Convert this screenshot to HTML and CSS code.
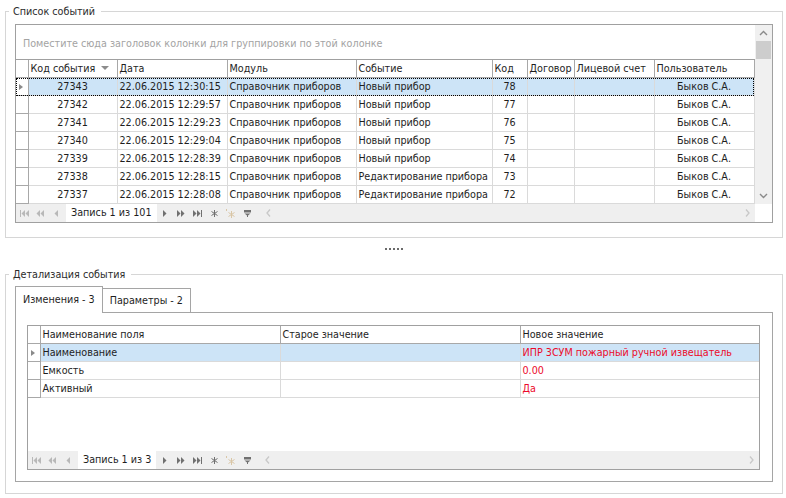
FILE: index.html
```html
<!DOCTYPE html>
<html lang="ru">
<head>
    <meta charset="UTF-8">
    <title>Журнал событий</title>
    <link rel="stylesheet" href="styles.css">
</head>
<body>

    <fieldset class="group group-events">
        <legend>Список событий</legend>
        <div class="grid grid-events">
            <div class="grid-main">
                <div class="group-panel">Поместите сюда заголовок колонки для группировки по этой колонке</div>
                <table class="data">
                    <colgroup>
                        <col style="width: 12px">
                        <col style="width: 89px">
                        <col style="width: 110px">
                        <col style="width: 129px">
                        <col style="width: 136px">
                        <col style="width: 35px">
                        <col style="width: 47px">
                        <col style="width: 80px">
                        <col style="width: 100px">
                    </colgroup>
                    <thead>
                        <tr>
                            <th class="ind"></th>
                            <th>Код события <span class="sort"></span></th>
                            <th>Дата</th>
                            <th>Модуль</th>
                            <th>Событие</th>
                            <th>Код</th>
                            <th>Договор</th>
                            <th>Лицевой счет</th>
                            <th>Пользователь</th>
                        </tr>
                    </thead>
                    <tbody>
                        <tr class="selected focused">
                            <td class="ind"><span class="row-mark"></span></td>
                            <td class="center">27343</td>
                            <td>22.06.2015 12:30:15</td>
                            <td>Справочник приборов</td>
                            <td>Новый прибор</td>
                            <td class="center">78</td>
                            <td></td>
                            <td></td>
                            <td class="center">Быков С.А.</td>
                        </tr>
                        <tr>
                            <td class="ind"></td>
                            <td class="center">27342</td>
                            <td>22.06.2015 12:29:57</td>
                            <td>Справочник приборов</td>
                            <td>Новый прибор</td>
                            <td class="center">77</td>
                            <td></td>
                            <td></td>
                            <td class="center">Быков С.А.</td>
                        </tr>
                        <tr>
                            <td class="ind"></td>
                            <td class="center">27341</td>
                            <td>22.06.2015 12:29:23</td>
                            <td>Справочник приборов</td>
                            <td>Новый прибор</td>
                            <td class="center">76</td>
                            <td></td>
                            <td></td>
                            <td class="center">Быков С.А.</td>
                        </tr>
                        <tr>
                            <td class="ind"></td>
                            <td class="center">27340</td>
                            <td>22.06.2015 12:29:04</td>
                            <td>Справочник приборов</td>
                            <td>Новый прибор</td>
                            <td class="center">75</td>
                            <td></td>
                            <td></td>
                            <td class="center">Быков С.А.</td>
                        </tr>
                        <tr>
                            <td class="ind"></td>
                            <td class="center">27339</td>
                            <td>22.06.2015 12:28:39</td>
                            <td>Справочник приборов</td>
                            <td>Новый прибор</td>
                            <td class="center">74</td>
                            <td></td>
                            <td></td>
                            <td class="center">Быков С.А.</td>
                        </tr>
                        <tr>
                            <td class="ind"></td>
                            <td class="center">27338</td>
                            <td>22.06.2015 12:28:15</td>
                            <td>Справочник приборов</td>
                            <td>Редактирование прибора</td>
                            <td class="center">73</td>
                            <td></td>
                            <td></td>
                            <td class="center">Быков С.А.</td>
                        </tr>
                        <tr>
                            <td class="ind"></td>
                            <td class="center">27337</td>
                            <td>22.06.2015 12:28:08</td>
                            <td>Справочник приборов</td>
                            <td>Редактирование прибора</td>
                            <td class="center">72</td>
                            <td></td>
                            <td></td>
                            <td class="center">Быков С.А.</td>
                        </tr>
                    </tbody>
                </table>
            </div>

            <div class="vscroll">
                <div class="vscroll-btn">
                    <svg width="9" height="6" viewBox="0 0 9 6"><polyline points="1,5 4.5,1.5 8,5" fill="none" stroke="#8a8a8a" stroke-width="1.4"/></svg>
                </div>
                <div class="vscroll-thumb"></div>
                <div class="vscroll-track"></div>
                <div class="vscroll-btn">
                    <svg width="9" height="6" viewBox="0 0 9 6"><polyline points="1,1 4.5,4.5 8,1" fill="none" stroke="#8a8a8a" stroke-width="1.4"/></svg>
                </div>
            </div>

            <div class="navigator">
                <span class="nav-btn off"><svg width="9" height="7" viewBox="0 0 9 7"><rect x="0" y="0" width="1" height="7"/><polygon points="5,0 1.5,3.5 5,7"/><polygon points="9,0 5.5,3.5 9,7"/></svg></span>
                <span class="nav-btn off"><svg width="8" height="7" viewBox="0 0 8 7"><polygon points="4,0 0.5,3.5 4,7"/><polygon points="8,0 4.5,3.5 8,7"/></svg></span>
                <span class="nav-btn off"><svg width="4" height="7" viewBox="0 0 4 7"><polygon points="4,0 0.5,3.5 4,7"/></svg></span>
                <span class="nav-info">Запись 1 из 101</span>
                <span class="nav-btn"><svg width="4" height="7" viewBox="0 0 4 7"><polygon points="0,0 3.5,3.5 0,7"/></svg></span>
                <span class="nav-btn"><svg width="8" height="7" viewBox="0 0 8 7"><polygon points="0,0 3.5,3.5 0,7"/><polygon points="4,0 7.5,3.5 4,7"/></svg></span>
                <span class="nav-btn"><svg width="9" height="7" viewBox="0 0 9 7"><polygon points="0,0 3.5,3.5 0,7"/><polygon points="4,0 7.5,3.5 4,7"/><rect x="8" y="0" width="1" height="7"/></svg></span>
                <span class="nav-btn"><svg width="7" height="7" viewBox="0 0 7 7"><g stroke="#707070" stroke-width="1"><line x1="3.5" y1="0" x2="3.5" y2="7"/><line x1="0.5" y1="1.5" x2="6.5" y2="5.5"/><line x1="0.5" y1="5.5" x2="6.5" y2="1.5"/></g></svg></span>
                <span class="nav-btn"><svg width="10" height="9" viewBox="0 0 10 9"><g stroke="#d9c6a6" stroke-width="1"><line x1="5.5" y1="2" x2="5.5" y2="9"/><line x1="2.5" y1="3.5" x2="8.5" y2="7.5"/><line x1="2.5" y1="7.5" x2="8.5" y2="3.5"/><line x1="0.5" y1="0" x2="0.5" y2="2"/></g></svg></span>
                <span class="nav-btn"><svg width="7" height="7" viewBox="0 0 7 7"><rect x="0" y="0" width="7" height="2.5"/><polygon points="0.5,3.5 6.5,3.5 4,5.5 4,7 3,7 3,5.5"/></svg></span>
                <div class="hscroll">
                    <svg width="5" height="8" viewBox="0 0 5 8"><polyline points="4,0.5 1,4 4,7.5" fill="none" stroke="#c8c8c8" stroke-width="1.3"/></svg>
                    <svg width="5" height="8" viewBox="0 0 5 8"><polyline points="1,0.5 4,4 1,7.5" fill="none" stroke="#c8c8c8" stroke-width="1.3"/></svg>
                </div>
            </div>
            <div class="corner"></div>
        </div>
    </fieldset>

    <div class="splitter"><span class="dots"></span></div>

    <fieldset class="group group-detail">
        <legend>Детализация события</legend>
        <div class="tabs">
            <span class="tab active">Изменения - 3</span>
            <span class="tab">Параметры - 2</span>
        </div>
        <div class="tab-page">
            <div class="grid grid-changes">
                <div class="grid-main">
                    <table class="data">
                        <colgroup>
                            <col style="width: 12px">
                            <col style="width: 240px">
                            <col style="width: 240px">
                            <col style="width: 240px">
                        </colgroup>
                        <thead>
                            <tr>
                                <th class="ind"></th>
                                <th>Наименование поля</th>
                                <th>Старое значение</th>
                                <th class="last">Новое значение</th>
                            </tr>
                        </thead>
                        <tbody>
                            <tr class="selected">
                                <td class="ind"><span class="row-mark"></span></td>
                                <td>Наименование</td>
                                <td></td>
                                <td class="last changed">ИПР 3СУМ пожарный ручной извещатель</td>
                            </tr>
                            <tr>
                                <td class="ind"></td>
                                <td>Емкость</td>
                                <td></td>
                                <td class="last changed">0.00</td>
                            </tr>
                            <tr>
                                <td class="ind"></td>
                                <td>Активный</td>
                                <td></td>
                                <td class="last changed">Да</td>
                            </tr>
                        </tbody>
                    </table>
                </div>

                <div class="navigator">
                    <span class="nav-btn off"><svg width="9" height="7" viewBox="0 0 9 7"><rect x="0" y="0" width="1" height="7"/><polygon points="5,0 1.5,3.5 5,7"/><polygon points="9,0 5.5,3.5 9,7"/></svg></span>
                    <span class="nav-btn off"><svg width="8" height="7" viewBox="0 0 8 7"><polygon points="4,0 0.5,3.5 4,7"/><polygon points="8,0 4.5,3.5 8,7"/></svg></span>
                    <span class="nav-btn off"><svg width="4" height="7" viewBox="0 0 4 7"><polygon points="4,0 0.5,3.5 4,7"/></svg></span>
                    <span class="nav-info">Запись 1 из 3</span>
                    <span class="nav-btn"><svg width="4" height="7" viewBox="0 0 4 7"><polygon points="0,0 3.5,3.5 0,7"/></svg></span>
                    <span class="nav-btn"><svg width="8" height="7" viewBox="0 0 8 7"><polygon points="0,0 3.5,3.5 0,7"/><polygon points="4,0 7.5,3.5 4,7"/></svg></span>
                    <span class="nav-btn"><svg width="9" height="7" viewBox="0 0 9 7"><polygon points="0,0 3.5,3.5 0,7"/><polygon points="4,0 7.5,3.5 4,7"/><rect x="8" y="0" width="1" height="7"/></svg></span>
                    <span class="nav-btn"><svg width="7" height="7" viewBox="0 0 7 7"><g stroke="#707070" stroke-width="1"><line x1="3.5" y1="0" x2="3.5" y2="7"/><line x1="0.5" y1="1.5" x2="6.5" y2="5.5"/><line x1="0.5" y1="5.5" x2="6.5" y2="1.5"/></g></svg></span>
                    <span class="nav-btn"><svg width="10" height="9" viewBox="0 0 10 9"><g stroke="#d9c6a6" stroke-width="1"><line x1="5.5" y1="2" x2="5.5" y2="9"/><line x1="2.5" y1="3.5" x2="8.5" y2="7.5"/><line x1="2.5" y1="7.5" x2="8.5" y2="3.5"/><line x1="0.5" y1="0" x2="0.5" y2="2"/></g></svg></span>
                    <span class="nav-btn"><svg width="7" height="7" viewBox="0 0 7 7"><rect x="0" y="0" width="7" height="2.5"/><polygon points="0.5,3.5 6.5,3.5 4,5.5 4,7 3,7 3,5.5"/></svg></span>
                    <div class="hscroll">
                        <svg width="5" height="8" viewBox="0 0 5 8"><polyline points="4,0.5 1,4 4,7.5" fill="none" stroke="#c8c8c8" stroke-width="1.3"/></svg>
                        <svg width="5" height="8" viewBox="0 0 5 8"><polyline points="1,0.5 4,4 1,7.5" fill="none" stroke="#c8c8c8" stroke-width="1.3"/></svg>
                    </div>
                </div>
            </div>
        </div>
    </fieldset>

</body>
</html>
```

FILE: styles.css
```css
body {
    margin: 0;
    padding: 5px 3px 0 5px;
    font-family: 'DejaVu Sans', 'Liberation Sans', sans-serif;
    font-stretch: condensed;
    font-size: 10.7px;
    color: #1e1e1e;
    background-color: #fff;
}

/* group boxes */

.group {
    margin: 0;
    border: 1px solid #d6d6d6;
    padding: 6px 9px 14px 9px;
    min-width: 0;
}

.group legend {
    margin-left: -6px;
    padding: 0 6px 0 4px;
    line-height: 13px;
    color: #2b2b2b;
}

.group-detail {
    padding: 5px 9px 11px 9px;
}

.splitter {
    height: 30px;
    display: flex;
    justify-content: center;
    padding-top: 10px;
    box-sizing: border-box;
}

.dots {
    width: 18px;
    height: 2px;
    background: linear-gradient(to right, #6a6a6a 0 2px, transparent 2px 4px);
    background-size: 4px 2px;
}

/* grid */

.grid {
    display: grid;
    border: 1px solid #a0a0a0;
    box-sizing: border-box;
    background-color: #fff;
}

.grid-events {
    height: 199px;
    grid-template-columns: 1fr 17px;
    grid-template-rows: 1fr 18px;
}

.grid-changes {
    height: 145px;
    grid-template-columns: 1fr;
    grid-template-rows: 1fr 18px;
}

.grid-main {
    overflow: hidden;
}

.group-panel {
    height: 35px;
    box-sizing: border-box;
    padding: 12px 0 0 7px;
    color: #a3a3a3;
    border-bottom: 1px solid #a0a0a0;
}

table.data {
    border-collapse: collapse;
    table-layout: fixed;
}

.grid-events table.data {
    width: 738px;
}

.grid-changes table.data {
    width: 732px;
}

table.data th,
table.data td {
    height: 16px;
    padding: 1px 0 0 2px;
    white-space: nowrap;
    overflow: hidden;
    text-align: left;
    font-weight: normal;
    line-height: 16px;
}

table.data th {
    border-right: 1px solid #a8a8a8;
    border-bottom: 1px solid #a8a8a8;
}

table.data td {
    border-right: 1px solid #dadada;
    border-bottom: 1px solid #dadada;
}

table.data .ind {
    padding: 0;
    height: 17px;
    border-right: 1px solid #a8a8a8;
    border-bottom: 1px solid #a8a8a8;
    background-color: #fff;
}

table.data td.center {
    text-align: center;
    padding: 1px 0 0 0;
}

table.data .last {
    border-right: none;
}

tr.selected td {
    background-color: #cde4f7;
}

tr.focused {
    outline: 1px dotted #000;
    outline-offset: -1px;
}

.row-mark {
    display: block;
    width: 0;
    height: 0;
    margin-left: 3px;
    border-top: 3.5px solid transparent;
    border-bottom: 3.5px solid transparent;
    border-left: 4px solid #8a8a8a;
}

.sort {
    display: inline-block;
    width: 0;
    height: 0;
    margin-left: 3px;
    vertical-align: 2px;
    border-left: 4px solid transparent;
    border-right: 4px solid transparent;
    border-top: 4px solid #8c8c8c;
}

td.changed {
    color: #ec0a2a;
}

/* scrollbars */

.vscroll {
    display: flex;
    flex-direction: column;
    background-color: #f0f0f0;
}

.vscroll-btn {
    height: 16px;
    display: flex;
    justify-content: center;
    align-items: center;
}

.vscroll-thumb {
    height: 18px;
    margin: 0 1px;
    background-color: #cdcdcd;
}

.vscroll-track {
    flex: 1;
}

.corner {
    background-color: #fff;
}

.navigator {
    display: flex;
    background-color: #efefef;
    line-height: 18px;
    fill: #707070;
}

.nav-btn {
    width: 16.5px;
    display: flex;
    justify-content: center;
    align-items: center;
    flex: none;
}

.nav-btn.off {
    fill: #b8b8b8;
    width: 16px;
}

.nav-info {
    background-color: #fff;
    padding: 0 5px;
    margin-left: 2px;
    color: #1e1e1e;
}

.hscroll {
    flex: 1;
    display: flex;
    justify-content: space-between;
    align-items: center;
    padding: 0 5px 0 10px;
}

/* tabs */

.tabs {
    display: flex;
    align-items: flex-end;
    height: 26px;
}

.tab {
    height: 24px;
    box-sizing: border-box;
    padding: 4px 7px 0 7px;
    border: 1px solid #a5a5a5;
    border-bottom: none;
    border-left: none;
    line-height: 16px;
}

.tab.active {
    height: 27px;
    margin-bottom: -1px;
    padding-top: 5px;
    border-left: 1px solid #a5a5a5;
    background-color: #fff;
    position: relative;
    z-index: 1;
}

.tab-page {
    border: 1px solid #a5a5a5;
    padding: 12px 12px 11px 11px;
}
```
